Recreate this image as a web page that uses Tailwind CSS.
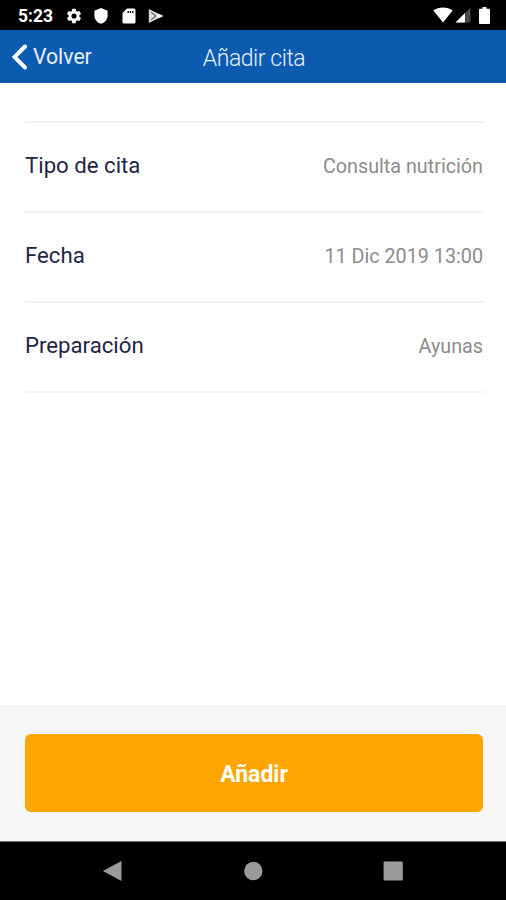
<!doctype html>
<html lang="es">
  <head>
    <meta charset="UTF-8" />
    <meta name="viewport" content="width=device-width, initial-scale=1.0" />
    <title>Añadir cita</title>
    <script src="https://cdn.jsdelivr.net/npm/@tailwindcss/browser@4"></script>
  </head>
  <body class="bg-white font-['Roboto',sans-serif] select-none">
    <div class="flex flex-col w-[506px] h-[900px] overflow-hidden">
      <!-- Barra de estado -->
      <div class="h-[30px] shrink-0 bg-black text-white flex items-center justify-between pl-[18px] pr-[16px]">
        <div class="flex items-center">
          <span class="w-[47px] text-[17.5px] leading-none font-bold pt-[4px]">5:23</span>
          <svg class="w-[18px] h-[18px] mt-[1px]" viewBox="0 0 24 24" fill="currentColor">
            <path d="M19.14 12.94c.04-.3.06-.61.06-.94 0-.32-.02-.64-.07-.94l2.03-1.58a.49.49 0 0 0 .12-.61l-1.92-3.32a.488.488 0 0 0-.59-.22l-2.39.96c-.5-.38-1.03-.7-1.62-.94l-.36-2.54a.484.484 0 0 0-.48-.41h-3.84c-.24 0-.43.17-.47.41l-.36 2.54c-.59.24-1.13.57-1.62.94l-2.39-.96c-.22-.08-.47 0-.59.22L2.74 8.87c-.12.21-.08.47.12.61l2.03 1.58c-.05.3-.09.63-.09.94s.02.64.07.94l-2.03 1.58a.49.49 0 0 0-.12.61l1.92 3.32c.12.22.37.29.59.22l2.39-.96c.5.38 1.03.7 1.62.94l.36 2.54c.05.24.24.41.48.41h3.84c.24 0 .44-.17.47-.41l.36-2.54c.59-.24 1.13-.56 1.62-.94l2.39.96c.22.08.47 0 .59-.22l1.92-3.32c.12-.22.07-.47-.12-.61l-2.01-1.58zM12 15.4a3.4 3.4 0 1 1 0-6.8 3.4 3.4 0 0 1 0 6.8z" />
          </svg>
          <svg class="w-[14px] h-[16px] ml-[11px] mt-[1px]" viewBox="0 0 14 16" fill="currentColor">
            <path d="M7 0l6.6 2.7v4.8c0 3.9-2.7 7.3-6.6 8.3C3.1 14.8.4 11.4.4 7.5V2.7z" />
          </svg>
          <svg class="w-[14px] h-[16px] ml-[14px] mt-[1px]" viewBox="0 0 14 16" fill="currentColor">
            <path fill-rule="evenodd" d="M5 .5h7A1.5 1.5 0 0 1 13.5 2v12a1.5 1.5 0 0 1-1.5 1.5H2A1.5 1.5 0 0 1 .5 14V5zM5.5 3v2h1.3V3zM7.8 3v2h1.3V3zM10.1 3v2h1.3V3z" />
          </svg>
          <svg class="w-[16px] h-[16px] ml-[12px] mt-[1px]" viewBox="0 0 16 16">
            <path d="M.8 1l14.5 7L.8 15z" fill="#d8d8d8" />
            <path d="M8 8l3-2.1L15.3 8 11 10.1z" fill="#fff" />
            <path d="M3.2 4.3L8 8l-4.800 3.7" fill="none" stroke="#444" stroke-width="1" />
          </svg>
        </div>
        <div class="flex items-center">
          <svg class="w-[20px] h-[16px]" viewBox="0 0 20 16" fill="currentColor">
            <path d="M10 15.5L.3 3.6C3 1.5 6.3.4 10 .4s7 1.100 9.700 3.200z" />
          </svg>
          <svg class="w-[16px] h-[16px] ml-[2px]" viewBox="0 0 16 16">
            <path d="M15.5.5v15H.5z" fill="#4a4a4a" />
            <path d="M10 6v9.500H.5z" fill="#fff" />
          </svg>
          <svg class="w-[11px] h-[17px] ml-[8px]" viewBox="0 0 11 17" fill="currentColor">
            <path d="M3.5 0h4v1.700H10a1 1 0 0 1 1 1V16a1 1 0 0 1-1 1H1a1 1 0 0 1-1-1V2.700a1 1 0 0 1 1-1h2.500z" />
          </svg>
        </div>
      </div>

      <!-- Cabecera -->
      <header class="h-[53px] shrink-0 bg-[#0b5cb0] text-[#e9effb] grid grid-cols-[1fr_auto_1fr] items-center pl-[12px] pr-[10px]">
        <a href="#" class="flex items-center">
          <svg class="w-[16px] h-[28px] mt-[1px]" viewBox="0 0 16 28" fill="none" stroke="#fff" stroke-width="4" stroke-linecap="round">
            <path d="M13 3.500L2.500 14 13 24.500" />
          </svg>
          <span class="ml-[5px] text-[21.2px] leading-none">Volver</span>
        </a>
        <h1 class="text-[23px] leading-none font-light tracking-[-0.45px] pt-[3px]">Añadir cita</h1>
      </header>

      <!-- Datos de la cita -->
      <main class="grow pt-[38px] pl-[25px] pr-[23px]">
        <ul class="border-b-2 border-[#f2f2f2]">
          <li class="h-[90px] border-t-2 border-[#f2f2f2] flex items-center justify-between">
            <span class="pb-[2px] text-[22.2px] text-[#1f2547]">Tipo de cita</span>
            <span class="text-[19.75px] text-[#8c8c8c]">Consulta nutrición</span>
          </li>
          <li class="h-[90px] border-t-2 border-[#f2f2f2] flex items-center justify-between">
            <span class="pb-[2px] text-[22.2px] text-[#1f2547]">Fecha</span>
            <span class="text-[19.75px] text-[#8c8c8c]">11 Dic 2019 13:00</span>
          </li>
          <li class="h-[90px] border-t-2 border-[#f2f2f2] flex items-center justify-between">
            <span class="pb-[2px] text-[22.2px] text-[#1f2547]">Preparación</span>
            <span class="text-[19.75px] text-[#8c8c8c]">Ayunas</span>
          </li>
        </ul>
      </main>

      <footer class="h-[136px] shrink-0 bg-[#f6f6f6] pt-[29px] pl-[25px] pr-[23px]">
        <button type="button" class="w-full h-[78px] rounded-md bg-[#ffa500] text-white text-[23px] font-bold pt-[4px]">Añadir</button>
      </footer>

      <!-- Barra de navegación -->
      <nav class="h-[59px] shrink-0 bg-black border-t border-[#777] text-[#9b9b9b] flex items-center pl-[102px]">
        <svg class="w-[20px] h-[22px]" viewBox="0 0 20 22" fill="currentColor">
          <path d="M19.500 1v20L.8 11z" />
        </svg>
        <svg class="w-[20px] h-[20px] ml-[121px]" viewBox="0 0 20 20" fill="currentColor">
          <circle cx="10.300" cy="10" r="9.200" />
        </svg>
        <svg class="w-[20px] h-[20px] ml-[120px]" viewBox="0 0 20 20" fill="currentColor">
          <rect x=".6" y=".6" width="19.200" height="19" rx="1" />
        </svg>
      </nav>
    </div>
  </body>
</html>
